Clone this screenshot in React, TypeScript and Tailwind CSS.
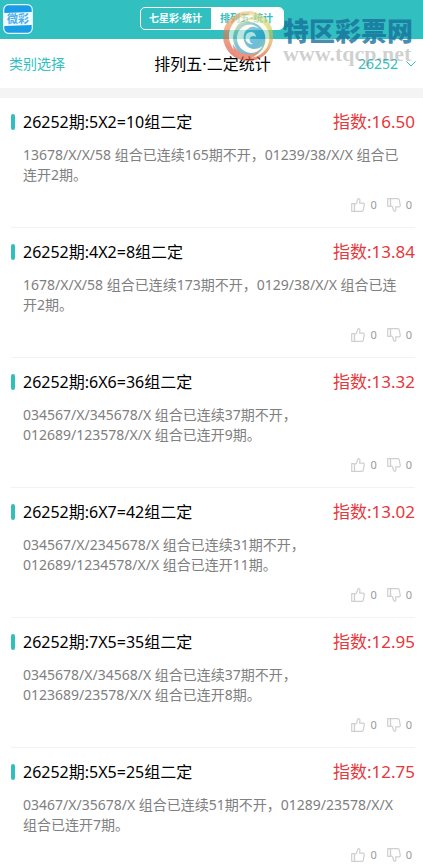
import { useState } from "react"

interface Forecast {
	title: string
	index: string
	detail: string
}

const forecasts: Forecast[] = [
	{
		title: "26252期:5X2=10组二定",
		index: "16.50",
		detail: "13678/X/X/58 组合已连续165期不开，01239/38/X/X 组合已连开2期。",
	},
	{
		title: "26252期:4X2=8组二定",
		index: "13.84",
		detail: "1678/X/X/58 组合已连续173期不开，0129/38/X/X 组合已连开2期。",
	},
	{
		title: "26252期:6X6=36组二定",
		index: "13.32",
		detail: "034567/X/345678/X 组合已连续37期不开，012689/123578/X/X 组合已连开9期。",
	},
	{
		title: "26252期:6X7=42组二定",
		index: "13.02",
		detail: "034567/X/2345678/X 组合已连续31期不开，012689/1234578/X/X 组合已连开11期。",
	},
	{
		title: "26252期:7X5=35组二定",
		index: "12.95",
		detail: "0345678/X/34568/X 组合已连续37期不开，0123689/23578/X/X 组合已连开8期。",
	},
	{
		title: "26252期:5X5=25组二定",
		index: "12.75",
		detail: "03467/X/35678/X 组合已连续51期不开，01289/23578/X/X 组合已连开7期。",
	},
]

function Thumb({ down = false }: { down?: boolean }) {
	return (
		<svg
			className={down ? "size-[14px] -scale-y-100" : "size-[14px]"}
			viewBox="0 0 14 14"
			fill="none"
			stroke="#cfcfcf"
			strokeWidth="1.2"
			strokeLinejoin="round"
		>
			<path d="M.7 5.700h2.800v7.600H.7z" />
			<path d="M3.500 6.400 5.500 5.200 6.700 1.300Q7.300.5 8.200.8 9 1.200 8.900 2.500L8.600 5.200h3.600q1.200.2 1.100 1.400l-1 5.400q-.3 1.300-1.500 1.300H3.500z" />
		</svg>
	)
}

function AppLogo() {
	return (
		<svg className="block size-[30px]" viewBox="0 0 30 30" role="img" aria-label="微彩">
			<rect x="1" y="1" width="28" height="28" rx="4" fill="#189ce6" />
			<path d="M1 9 29 8v13L1 22z" fill="#f4fbff" />
			<text
				x="15"
				y="19"
				textAnchor="middle"
				fontSize="11"
				fontWeight="700"
				fill="#4aaee8"
				fontFamily="Noto Sans CJK SC, sans-serif"
			>
				微彩
			</text>
			<rect x=".7" y=".7" width="28.600" height="28.600" rx="5" fill="none" stroke="#e9fbfb" strokeWidth="1.200" />
		</svg>
	)
}

function Swirl() {
	return (
		<svg className="size-[52px] opacity-65" viewBox="0 0 52 52">
			<defs>
				<clipPath id="disc">
					<circle cx="26" cy="26" r="25" />
				</clipPath>
				<linearGradient id="left" x1=".6" y1="0" x2=".3" y2="1">
					<stop offset="0" stopColor="#f3cf86" />
					<stop offset=".35" stopColor="#eb9760" />
					<stop offset="1" stopColor="#d8402f" />
				</linearGradient>
				<linearGradient id="right" x1=".3" y1="0" x2=".5" y2="1">
					<stop offset="0" stopColor="#f6e29a" />
					<stop offset=".45" stopColor="#c3cf52" />
					<stop offset=".7" stopColor="#e8a24a" />
					<stop offset="1" stopColor="#d8402f" />
				</linearGradient>
				<linearGradient id="core" x1="0" y1="0" x2="1" y2="1">
					<stop offset="0" stopColor="#d9dc8e" />
					<stop offset=".4" stopColor="#3aa9c4" />
					<stop offset=".7" stopColor="#2597c6" />
					<stop offset="1" stopColor="#7cc05a" />
				</linearGradient>
			</defs>
			<g clipPath="url(#disc)">
				<path d="M0 0h52v52H0z" fill="url(#left)" />
				<path d="M14 10C28-2 47 4 51 20c3 16-8 31-23 32 8-6 13-14 13-23C40 15 27 8 14 10z" fill="url(#right)" />
				<path d="M11 22c3-10 14-14 24-9 10 6 11 19 5 27-5 7-12 8-18 6-9-5-14-14-11-24z" fill="url(#core)" />
				{/* blades taper from the rim towards the hub */}
				<path d="M34 6C19 3 6 13 7 28c1 9 7 16 16 20-8-6-12-13-12-21C12 15 21 8 34 6z" fill="#fffdf2" />
				<path d="M17 14c12-5 23 0 26 11 2 10-3 18-14 23 14-3 20-13 18-25C44 11 30 5 17 14z" fill="#fff8dc" />
				<path d="M37 18c-8-7-20-3-22 8-1 9 5 16 14 17 5 0 9-3 12-7-6 4-13 4-17-1-4-6-3-14 3-17 3-2 7-1 10 0z" fill="#fffdf2" />
				<path d="M11 34c4 10 18 14 28 6-6 7-13 10-22 8-4-3-6-8-6-14z" fill="#df5a3f" />
				<path d="M34 27c0-5-7-7-10-2-2 5 2 10 7 9-3-1-4-4-3-6s4-3 6-1z" fill="#e9f7f4" />
			</g>
		</svg>
	)
}

function Watermark() {
	return (
		<div className="pointer-events-none absolute top-[10px] right-[10px] flex items-start gap-[9px]" aria-hidden="true">
			<Swirl />
			<div className="flex flex-col pt-[6px]">
				<span className="font-['Noto_Sans_CJK_SC',sans-serif] text-[26px] leading-7 font-black text-[#176f9c]/80">
					特区彩票网
				</span>
				<span className="font-['Liberation_Serif',serif] text-[22px] leading-5 font-bold text-[#777]/35">
					www.tqcp.net
				</span>
			</div>
		</div>
	)
}

function ForecastItem({ title, index, detail }: Forecast) {
	const [likes, setLikes] = useState(0)
	const [dislikes, setDislikes] = useState(0)

	return (
		<li className="border-b border-[#f2f2f2] pt-[10px] pb-[14px]">
			<div className="flex h-7 items-center justify-between">
				<h2 className="flex items-center gap-2 text-[16px] text-black">
					<span className="h-4 w-1 rounded-sm bg-[#32bebe]" />
					{title}
				</h2>
				<span className="text-[17px] text-[#e4393c]">指数:{index}</span>
			</div>
			<p className="mt-[9px] pr-2 pl-3 text-[14px] leading-5 text-[#808080]">
				{detail.split(/([\dX/]*\/[\dX/]*)/).map((part, i) =>
					part.includes("/") ? (
						<span key={i} className="whitespace-nowrap">
							{part}
						</span>
					) : (
						part
					),
				)}
			</p>
			<div className="mt-3 flex h-4 items-center justify-end gap-[10px] pr-[3px] text-[11px] text-[#999]">
				<button
					type="button"
					aria-label="赞"
					className="flex items-center gap-[5px]"
					onClick={() => setLikes(likes + 1)}
				>
					<Thumb />
					{likes}
				</button>
				<button
					type="button"
					aria-label="踩"
					className="flex items-center gap-[5px]"
					onClick={() => setDislikes(dislikes + 1)}
				>
					<Thumb down />
					{dislikes}
				</button>
			</div>
		</li>
	)
}

export default function App() {
	return (
		<div className="relative bg-white font-['Noto_Sans','Noto_Sans_CJK_SC',sans-serif]">
			<header className="grid h-[39px] grid-cols-[1fr_auto_1fr] items-center bg-[#32bfbf] px-[3px] pb-[2px]">
				<a href="#home" className="justify-self-start">
					<AppLogo />
				</a>
				<nav className="flex h-[23px] overflow-hidden rounded-[5px] border border-white text-[10px] font-bold">
					<button type="button" className="w-[70px] text-white">
						七星彩·统计
					</button>
					<button type="button" className="w-[72px] bg-white text-[#32bfbf]">
						排列五·统计
					</button>
				</nav>
			</header>
			<div className="grid h-[49px] grid-cols-[1fr_auto_1fr] items-center pr-[7px] pl-[9px]">
				<button type="button" className="justify-self-start text-[14px] text-[#32bfbf]">
					类别选择
				</button>
				<h1 className="text-[16px] text-black">排列五·二定统计</h1>
				<button
					type="button"
					className="flex items-center gap-2 justify-self-end text-[14px] text-[#32bfbf]"
				>
					26252
					<svg className="h-2 w-[10px]" viewBox="0 0 10 8" fill="none" stroke="currentColor">
						<path d="m.5 1.500 4.500 4.500 4.500-4.500" />
					</svg>
				</button>
			</div>
			<div className="h-[10px] bg-[#f4f4f4]" />
			<ul className="pr-2 pl-[11px]">
				{forecasts.map((item) => (
					<ForecastItem key={item.title} {...item} />
				))}
			</ul>
			<Watermark />
		</div>
	)
}
